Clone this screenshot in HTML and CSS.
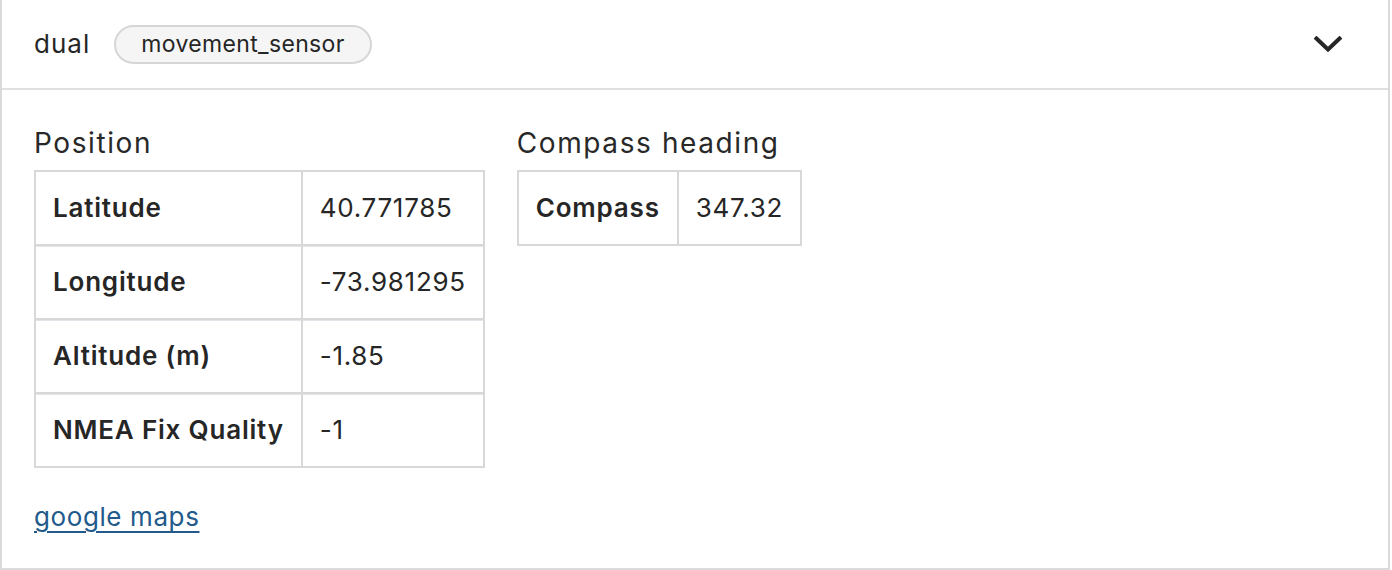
FILE: index.html
```html
<!DOCTYPE html>
<html lang="en">
<head>
<meta charset="utf-8">
<title>dual movement_sensor</title>
<link rel="stylesheet" href="styles.css">
</head>
<body>
<section class="card">
  <header class="card-header">
    <span class="name">dual</span>
    <span class="chip">movement_sensor</span>
    <span class="spacer"></span>
    <svg class="chevron" width="28" height="16" viewBox="0 0 28 16" aria-hidden="true">
      <polyline points="2.5,2.5 14,13.5 25.5,2.5" fill="none" stroke="#262626" stroke-width="4" stroke-linejoin="miter" stroke-linecap="square"/>
    </svg>
  </header>
  <div class="card-body">
    <div class="sections">
      <div class="section">
        <h3 class="section-title">Position</h3>
        <table class="data">
          <tr><th>Latitude</th><td>40.771785</td></tr>
          <tr><th>Longitude</th><td>-73.981295</td></tr>
          <tr><th>Altitude (m)</th><td>-1.85</td></tr>
          <tr><th>NMEA Fix Quality</th><td>-1</td></tr>
        </table>
      </div>
      <div class="section">
        <h3 class="section-title">Compass heading</h3>
        <table class="data">
          <tr><th>Compass</th><td>347.32</td></tr>
        </table>
      </div>
    </div>
    <a class="map-link" href="#">google maps</a>
  </div>
</section>
</body>
</html>
```

FILE: styles.css
```css
* { box-sizing: border-box; }

body {
  margin: 0;
  background: #ffffff;
  font-family: Inter, "Liberation Sans", sans-serif;
  color: #262626;
}

.card {
  width: 1390px;
  height: 570px;
  border: 2px solid #dadada;
  border-top: none;
  display: flex;
  flex-direction: column;
}

.card-header {
  height: 90px;
  border-bottom: 2px solid #e0e0e0;
  display: flex;
  align-items: center;
  padding: 0 46px 0 32px;
  gap: 24px;
}

.name {
  font-size: 26px;
  line-height: 36px;
  letter-spacing: 1px;
}

.chip {
  height: 39px;
  padding: 0 25px;
  border: 2px solid #d6d6d6;
  background: #f5f5f5;
  border-radius: 20px;
  font-size: 23px;
  line-height: 34px;
  letter-spacing: 0.35px;
  display: inline-flex;
  align-items: center;
}

.spacer { flex: 1; }

.chevron { display: block; }

.card-body {
  padding: 35px 32px 0 32px;
  flex: 1;
}

.sections {
  display: flex;
  gap: 32px;
  align-items: flex-start;
}

.section-title {
  margin: 0 0 9px 0;
  font-size: 28px;
  line-height: 36px;
  font-weight: 400;
  letter-spacing: 1.6px;
  color: #282828;
}

.data {
  border-collapse: collapse;
  font-size: 26px;
  line-height: 36px;
}

.data th,
.data td {
  border: 2px solid #d8d8d8;
  padding: 18px 17px;
  text-align: left;
  white-space: nowrap;
}

.data tr + tr th,
.data tr + tr td {
  box-shadow: inset 0 1px 0 #e2e6eb;
}

.data th {
  font-weight: 600;
  letter-spacing: 0.8px;
}

.data td {
  font-weight: 400;
  letter-spacing: 0.7px;
}

.map-link {
  display: inline-block;
  margin-top: 31px;
  font-size: 26px;
  line-height: 36px;
  letter-spacing: 0.6px;
  color: #225a8b;
  text-decoration: underline;
  text-decoration-thickness: 2px;
  text-underline-offset: 5px;
}
```
